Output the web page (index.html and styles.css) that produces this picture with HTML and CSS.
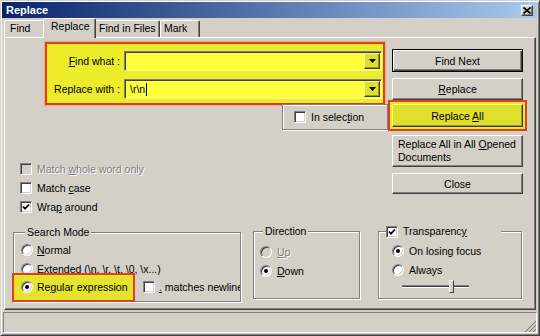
FILE: index.html
```html
<!DOCTYPE html>
<html>
<head>
  <meta charset="utf-8">
  <title>Replace</title>
  <link rel="stylesheet" href="styles.css">
</head>
<body>
<div class="window">
  <div class="titlebar">
    <span class="title">Replace</span>
    <span class="close">
      <svg width="8" height="7" viewBox="0 0 8 7"><path d="M0.5 0.5l7 6M7.5 0.5l-7 6" stroke="#000" stroke-width="1.7"/></svg>
    </span>
  </div>

  <div class="tabs">
    <div class="tab tab-find">Find</div>
    <div class="tab tab-replace active">Replace</div>
    <div class="tab tab-files">Find in Files</div>
    <div class="tab tab-mark">Mark</div>
  </div>

  <div class="panel">
    <div class="top">
      <div class="left">
        <div class="fields">
          <div class="field-row">
            <label class="field-label"><u>F</u>ind what :</label>
            <div class="combo">
              <span class="combo-text"></span>
              <span class="drop"><svg width="7" height="4" viewBox="0 0 7 4"><path d="M0 0h7L3.5 4z" fill="#000"/></svg></span>
            </div>
          </div>
          <div class="field-row">
            <label class="field-label">Replace with :</label>
            <div class="combo">
              <span class="combo-text">\r\n<i class="caret"></i></span>
              <span class="drop"><svg width="7" height="4" viewBox="0 0 7 4"><path d="M0 0h7L3.5 4z" fill="#000"/></svg></span>
            </div>
          </div>
        </div>

        <div class="selection etched">
          <span class="checkbox"></span>
          <span>In selec<u>t</u>ion</span>
        </div>

        <div class="checks">
          <div class="check-row disabled">
            <span class="checkbox"></span>
            <span>Match <u>w</u>hole word only</span>
          </div>
          <div class="check-row">
            <span class="checkbox"></span>
            <span>Match <u>c</u>ase</span>
          </div>
          <div class="check-row">
            <span class="checkbox checked"><svg width="8" height="8" viewBox="0 0 8 8"><path d="M1 3.5l2 2.2L7 1.5" fill="none" stroke="#000" stroke-width="1.8"/></svg></span>
            <span>Wra<u>p</u> around</span>
          </div>
        </div>
      </div>

      <div class="buttons">
        <div class="btn btn-default">Find Next</div>
        <div class="btn btn-replace"><span><u>R</u>eplace</span></div>
        <div class="btn btn-all"><span>Replace <u>A</u>ll</span></div>
        <div class="btn btn-multi"><span class="btn-lines">Replace All in All <u>O</u>pened<br>Documents</span></div>
        <div class="btn btn-close">Close</div>
      </div>
    </div>

    <div class="groups">
      <fieldset class="group etched search">
        <legend>Search Mode</legend>
        <div class="radio-row">
          <span class="radio"></span>
          <span><u>N</u>ormal</span>
        </div>
        <div class="radio-row">
          <span class="radio"></span>
          <span>E<u>x</u>tended (\n, \r, \t, \0, \x...)</span>
        </div>
        <div class="radio-row">
          <div class="hl">
            <span class="radio on"></span>
            <span>Re<u>g</u>ular expression</span>
          </div>
          <span class="checkbox nl-box"></span>
          <span class="nl-text"><u>.</u> matches newline</span>
        </div>
      </fieldset>

      <fieldset class="group etched direction">
        <legend>Direction</legend>
        <div class="radio-row disabled">
          <span class="radio"></span>
          <span><u>U</u>p</span>
        </div>
        <div class="radio-row">
          <span class="radio on"></span>
          <span><u>D</u>own</span>
        </div>
      </fieldset>

      <fieldset class="group etched transparency">
        <legend>
          <span class="checkbox checked"><svg width="8" height="8" viewBox="0 0 8 8"><path d="M1 3.5l2 2.2L7 1.5" fill="none" stroke="#000" stroke-width="1.8"/></svg></span>
          <span>Transparenc<u>y</u></span>
        </legend>
        <div class="radio-row">
          <span class="radio on"></span>
          <span>On losing focus</span>
        </div>
        <div class="radio-row">
          <span class="radio"></span>
          <span>Always</span>
        </div>
        <div class="slider">
          <span class="track"></span>
          <span class="thumb"></span>
        </div>
      </fieldset>
    </div>
  </div>

  <div class="statusbar">
    <svg class="grip" width="12" height="12" viewBox="0 0 12 12">
      <path d="M11 1L1 11M11 5L5 11M11 9L9 11" stroke="#fff" stroke-width="1"/>
      <path d="M12 1L1 12M12 5L5 12M12 9L9 12" stroke="#808080" stroke-width="1.2"/>
    </svg>
  </div>
</div>
</body>
</html>
```

FILE: styles.css
```css
* {
  box-sizing: border-box;
}

body {
  margin: 0;
  font-family: "Liberation Sans", Arial, sans-serif;
  font-size: 10.5px;
  color: #000;
  background: #d4d0c8;
}

u {
  text-decoration: underline;
  text-underline-offset: 1px;
}

/* window frame */
.window {
  width: 540px;
  height: 336px;
  display: flex;
  flex-direction: column;
  padding: 1px 2px 2px 1px;
  background: #d4d0c8;
  border: 1px solid;
  border-color: #d4d0c8 #404040 #404040 #d4d0c8;
  box-shadow: inset 1px 1px #fff, inset -1px -1px #808080;
}

.titlebar {
  flex: none;
  height: 16px;
  display: flex;
  align-items: center;
  justify-content: space-between;
  padding: 0 4px;
  background: linear-gradient(90deg, #0a246a, #a6caf0);
}

.title {
  color: #fff;
  font-weight: bold;
  font-size: 11px;
}

.close {
  width: 12px;
  height: 11px;
  display: flex;
  align-items: center;
  justify-content: center;
  background: #d4d0c8;
  border: 1px solid;
  border-color: #fff #404040 #404040 #fff;
  box-shadow: inset -1px -1px #808080;
}

/* tabs */
.tabs {
  flex: none;
  height: 19px;
  display: flex;
  align-items: flex-end;
  padding-left: 2px;
}

.tab {
  height: 17px;
  line-height: 15px;
  padding-left: 5px;
  white-space: nowrap;
  background: #d4d0c8;
  border: 1px solid;
  border-bottom: none;
  border-color: #fff #404040 transparent #fff;
  border-radius: 2px 2px 0 0;
  box-shadow: inset -1px 0 #808080;
}

.tab-find { width: 41px; }
.tab-files { width: 66px; padding-left: 4px; }
.tab-mark { width: 40px; padding-left: 3px; }

.tab.active {
  position: relative;
  z-index: 1;
  width: 53px;
  height: 20px;
  margin: 0 -2px -1px;
  padding-left: 7px;
  line-height: 15px;
}

.panel {
  flex: 1;
  margin: 0 1px 0 2px;
  display: flex;
  flex-direction: column;
  border: 1px solid;
  border-color: #fff #404040 #404040 #fff;
  box-shadow: inset -1px -1px #808080;
}

.top {
  flex: none;
  height: 186px;
  display: flex;
}

.left {
  width: 383px;
  display: flex;
  flex-direction: column;
  align-items: flex-start;
}

/* highlighted find / replace fields */
.fields {
  width: 340px;
  height: 63px;
  margin: 4px 0 0 40px;
  padding-top: 7px;
  background: #ecec2a;
  border: 2px solid #e23e1e;
  box-shadow: 0 0 1px 1px rgba(240, 140, 80, 0.5);
}

.field-row {
  height: 20px;
  display: flex;
  align-items: center;
}

.field-row + .field-row {
  margin-top: 8px;
}

.field-label {
  width: 73px;
  margin-right: 4px;
  text-align: right;
}

.combo {
  width: 258px;
  height: 20px;
  display: flex;
  align-items: center;
  justify-content: space-between;
  padding: 1px 1px 1px 5px;
  background: #ffff3c;
  border: 1px solid;
  border-color: #808080 #ffffa0 #ffffa0 #808080;
  box-shadow: inset 1px 1px #404040;
}

.combo-text {
  display: flex;
  align-items: center;
}

.caret {
  display: inline-block;
  width: 1px;
  height: 13px;
  margin-left: 1px;
  background: #000;
}

.drop {
  width: 16px;
  height: 16px;
  display: flex;
  align-items: center;
  justify-content: center;
  background: #dede2c;
  border: 1px solid;
  border-color: #f4f4a0 #404000 #404000 #f4f4a0;
  box-shadow: inset -1px -1px #9a9a20;
}

/* group boxes */
.etched {
  border: 1px solid #808080;
  box-shadow: inset 1px 1px #fff, 1px 1px #fff;
}

.selection {
  width: 106px;
  height: 26px;
  margin: -1px 0 0 277px;
  padding-left: 11px;
  display: flex;
  align-items: center;
  gap: 5px;
}

.checks {
  margin: 29px 0 0 15px;
}

.check-row {
  height: 19px;
  display: flex;
  align-items: center;
  gap: 5px;
}

.disabled {
  color: #808080;
  text-shadow: 1px 1px #fff;
}

.checkbox {
  flex: none;
  width: 12px;
  height: 12px;
  display: inline-flex;
  align-items: center;
  justify-content: center;
  background: #fff;
  border: 1px solid;
  border-color: #808080 #fff #fff #808080;
  box-shadow: inset 1px 1px #404040, inset -1px -1px #d4d0c8;
}

.disabled .checkbox,
.disabled .radio {
  background: #d4d0c8;
}

.radio {
  flex: none;
  width: 12px;
  height: 12px;
  display: inline-flex;
  align-items: center;
  justify-content: center;
  border-radius: 50%;
  background: #fff;
  border: 1px solid;
  border-color: #808080 #fff #fff #808080;
  box-shadow: inset 1px 1px #404040, inset -1px -1px #d4d0c8;
}

.radio.on::after {
  content: "";
  width: 4px;
  height: 4px;
  border-radius: 50%;
  background: #000;
}

/* buttons */
.buttons {
  width: 131px;
  margin-left: 4px;
  padding-top: 11px;
  display: flex;
  flex-direction: column;
}

.btn {
  height: 22px;
  display: flex;
  align-items: center;
  justify-content: center;
  background: #d4d0c8;
  border: 1px solid;
  border-color: #fff #404040 #404040 #fff;
  box-shadow: inset -1px -1px #808080;
}

.btn-default {
  height: 23px;
  border-color: #000;
  box-shadow: inset 1px 1px #fff, inset -1px -1px #404040, inset -2px -2px #808080;
}

.btn-replace {
  margin-top: 6px;
}

.btn-all {
  height: 23px;
  margin-top: 4px;
  background: #dfdf2c;
  border-color: #ffff90 #404000 #404000 #ffff90;
  box-shadow: inset -1px -1px #9a9a20, 0 0 0 2px #e8e830, 0 0 0 4px #e23e1e;
}

.btn-multi {
  height: 32px;
  margin-top: 8px;
  padding-left: 5px;
  justify-content: flex-start;
}

.btn-lines {
  display: block;
  line-height: 13px;
  white-space: nowrap;
}

.btn-close {
  height: 21px;
  margin-top: 6px;
}

/* bottom group boxes */
.groups {
  display: flex;
  align-items: flex-start;
  padding-left: 8px;
  margin-top: 1px;
}

.group {
  margin: 0;
  padding: 0;
  min-width: 0;
}

.group legend {
  height: 13px;
  line-height: 13px;
  padding: 0 2px;
  background: #d4d0c8;
}

.radio-row {
  height: 18.5px;
  display: flex;
  align-items: center;
  gap: 4px;
}

.search {
  width: 228px;
  height: 76px;
  margin-top: 1px;
  padding: 2px 0 0 7px;
}

.search legend {
  margin-left: 4px;
}

.hl {
  flex: none;
  width: 119px;
  height: 25px;
  margin-left: -7px;
  padding-left: 7px;
  display: flex;
  align-items: center;
  gap: 4px;
  background: #e4e42e;
  box-shadow: 0 0 0 2px #e23e1e;
}

.nl-box {
  margin-left: 6px;
}

.nl-text {
  flex: 1;
  min-width: 0;
  overflow: hidden;
  white-space: nowrap;
}

.direction {
  width: 107px;
  height: 74px;
  margin-left: 12px;
  padding: 4px 0 0 6px;
}

.direction legend {
  margin-left: 3px;
}

.direction .radio-row,
.transparency .radio-row {
  height: 19px;
  gap: 5px;
}

.transparency {
  width: 144px;
  height: 74px;
  margin-left: 18px;
  padding: 3px 0 0 13px;
}

.transparency legend {
  width: 115px;
  margin-left: -6px;
  padding: 0;
  display: flex;
  align-items: center;
  gap: 5px;
}

.slider {
  position: relative;
  width: 67px;
  height: 13px;
  margin: 1px 0 0 10px;
}

.track {
  position: absolute;
  left: 0;
  right: 0;
  top: 5px;
  height: 3px;
  border-top: 1px solid #808080;
  border-bottom: 1px solid #fff;
  background: #404040;
  background-clip: content-box;
}

.thumb {
  position: absolute;
  left: 47px;
  top: 0;
  width: 5px;
  height: 13px;
  background: #d4d0c8;
  border: 1px solid;
  border-color: #fff #404040 #404040 #fff;
}

/* status bar */
.statusbar {
  flex: none;
  height: 21px;
  margin: 2px 0 0 1px;
  display: flex;
  justify-content: flex-end;
  align-items: flex-end;
  border: 1px solid;
  border-color: #808080 #fff #fff #808080;
}

.grip {
  display: block;
}
```
